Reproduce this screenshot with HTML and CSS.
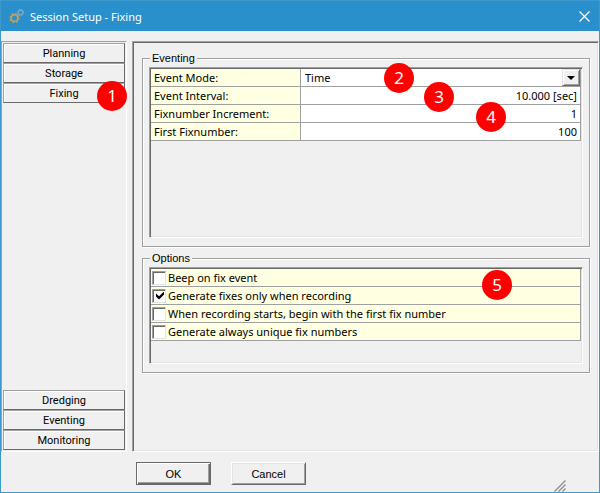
FILE: index.html
```html
<!DOCTYPE html>
<html lang="en">
<head>
    <meta charset="UTF-8">
    <meta name="viewport" content="width=device-width, initial-scale=1.0">
    <title>Session Setup - Fixing</title>
    <link rel="stylesheet" href="styles.css">
</head>
<body>
    <div class="window">
        <header class="titlebar">
            <svg class="app-icon" width="16" height="16" viewBox="0 0 16 16" fill="none">
                <circle cx="5.500" cy="10" r="3.300" stroke="#cfa04e" stroke-width="1.500" />
                <circle cx="5.500" cy="10" r="4.500" stroke="#cfa04e" stroke-width="1.200" stroke-dasharray="1.750 1.784" />
                <circle cx="11.500" cy="4.500" r="2.300" stroke="#7fa9c4" stroke-width="1.200" />
                <circle cx="11.500" cy="4.500" r="3.300" stroke="#7fa9c4" stroke-width="1" stroke-dasharray="1.300 1.292" />
            </svg>
            <h1 class="title">Session Setup - Fixing</h1>
            <button class="close" type="button" aria-label="Close">
                <svg width="11" height="11" viewBox="0 0 11 11" stroke="#fff" stroke-width="1.200">
                    <path d="M0.500 0.500L10.500 10.500M10.500 0.500L0.500 10.500" />
                </svg>
            </button>
        </header>

        <div class="content">
            <nav class="sidebar">
                <button class="tab" type="button">Planning</button>
                <button class="tab" type="button">Storage</button>
                <button class="tab" type="button">Fixing</button>
                <div class="spacer"></div>
                <button class="tab" type="button">Dredging</button>
                <button class="tab" type="button">Eventing</button>
                <button class="tab" type="button">Monitoring</button>
                <span class="badge badge-1">1</span>
            </nav>

            <main class="panel">
                <fieldset class="group">
                    <legend>Eventing</legend>
                    <div class="sunken eventing">
                        <table class="grid">
                            <tr>
                                <th><label for="mode">Event Mode:</label></th>
                                <td>
                                    <div class="select-wrap">
                                        <select id="mode">
                                            <option>Time</option>
                                        </select>
                                        <span class="arrow"></span>
                                    </div>
                                </td>
                            </tr>
                            <tr>
                                <th><label for="interval">Event Interval:</label></th>
                                <td><input type="text" id="interval" value="10.000 [sec]"></td>
                            </tr>
                            <tr>
                                <th><label for="increment">Fixnumber Increment:</label></th>
                                <td><input type="text" id="increment" value="1"></td>
                            </tr>
                            <tr>
                                <th><label for="first">First Fixnumber:</label></th>
                                <td><input type="text" id="first" value="100"></td>
                            </tr>
                        </table>
                        <span class="badge badge-2">2</span>
                        <span class="badge badge-3">3</span>
                        <span class="badge badge-4">4</span>
                    </div>
                </fieldset>

                <fieldset class="group">
                    <legend>Options</legend>
                    <div class="sunken options">
                        <label class="option"><input type="checkbox">Beep on fix event</label>
                        <label class="option"><input type="checkbox" checked>Generate fixes only when recording</label>
                        <label class="option"><input type="checkbox">When recording starts, begin with the first fix number</label>
                        <label class="option"><input type="checkbox">Generate always unique fix numbers</label>
                        <span class="badge badge-5">5</span>
                    </div>
                </fieldset>
            </main>
        </div>

        <footer class="footer">
            <button class="btn btn-default" type="submit">OK</button>
            <button class="btn" type="button">Cancel</button>
            <svg class="grip" width="12" height="12" viewBox="0 0 12 12" stroke="#8c8c8c" stroke-width="1.300">
                <path d="M0.500 11.500L11.500 0.500M4.500 11.500L11.500 4.500M8.500 11.500L11.500 8.500" />
            </svg>
        </footer>
    </div>
</body>
</html>
```
FILE: styles.css
```css
* {
    box-sizing: border-box;
}

body {
    margin: 0;
    font-family: "Noto Sans", "Open Sans", sans-serif;
    font-size: 11px;
    color: #000;
}

button,
input,
select {
    font: inherit;
    color: inherit;
}

.window {
    min-height: 100vh;
    display: flex;
    flex-direction: column;
    border: 1px solid #3c98cd;
    background: #f0f0f0;
}

.titlebar {
    height: 30px;
    display: flex;
    align-items: center;
    padding: 0 9px 0 8px;
    background: #2a90cc;
    color: #fff;
}

.title {
    flex: 1;
    margin: 0 0 0 5px;
    font-size: 11px;
    font-weight: normal;
}

.close {
    display: flex;
    padding: 0;
    border: none;
    background: none;
}

.content {
    flex: 1;
    display: flex;
    gap: 5px;
    padding-top: 10px;
}

/* Sidebar */
.sidebar {
    position: relative;
    width: 126px;
    display: flex;
    flex-direction: column;
    padding: 1px;
    border: 1px solid;
    border-color: #a0a0a0 #fff #fff #a0a0a0;
}

.spacer {
    flex: 1;
}

.tab {
    height: 20px;
    padding: 1px 0 0;
    border: 1px solid;
    border-color: #a0a0a0 #696969 #696969 #a0a0a0;
    box-shadow: inset 1px 1px 0 #fff;
    background: #f0f0f0;
    font-family: Roboto, sans-serif;
    line-height: 17px;
}

/* Main panel */
.panel {
    flex: 1;
    display: flex;
    flex-direction: column;
    gap: 4px;
    padding: 9px 8px 8px 9px;
    border: 1px solid;
    border-color: #a0a0a0 #fff #fff #a0a0a0;
    box-shadow: inset 1px 1px 0 #696969, inset -1px -1px 0 #e3e3e3;
}

.group {
    min-width: 0;
    margin: 0;
    padding: 2px 6px 8px;
    border: 1px solid #a0a0a0;
    box-shadow: 1px 1px 0 #fff, inset 1px 1px 0 #fff;
}

.group legend {
    padding: 0 2px;
    margin-left: 1px;
    background: #f0f0f0;
    font-family: "Liberation Sans", Arial, sans-serif;
    line-height: 14px;
}

.sunken {
    position: relative;
    padding: 1px;
    border: 1px solid;
    border-color: #a0a0a0 #fff #fff #a0a0a0;
    box-shadow: inset 1px 1px 0 #696969, inset -1px -1px 0 #e3e3e3;
}

.eventing {
    min-height: 171px;
}

.options {
    min-height: 97px;
}

.grid {
    width: 100%;
    table-layout: fixed;
    border-collapse: separate;
    border-spacing: 0;
}

.grid th,
.grid td {
    height: 18px;
    padding: 0;
    border-right: 1px solid #a0a0a0;
    border-bottom: 1px solid #a0a0a0;
    line-height: 17px;
}

.grid th {
    width: 150px;
    padding-left: 3px;
    background: #ffffe1;
    font-weight: normal;
    text-align: left;
}

.grid td {
    background: #fff;
}

.grid label,
.grid input,
.grid select {
    display: block;
    width: 100%;
    height: 17px;
}

.grid input {
    padding: 0 3px;
    border: none;
    background: none;
    text-align: right;
}

.grid select {
    appearance: none;
    padding: 0 20px 0 4px;
    border: none;
    background: none;
}

.select-wrap {
    position: relative;
}

.arrow {
    position: absolute;
    top: 0;
    right: 0;
    width: 18px;
    height: 17px;
    display: flex;
    align-items: center;
    justify-content: center;
    border: 1px solid;
    border-color: #e3e3e3 #696969 #696969 #e3e3e3;
    box-shadow: inset 1px 1px 0 #fff, inset -1px -1px 0 #a0a0a0;
    background: #f0f0f0;
    pointer-events: none;
}

.arrow::after {
    content: "";
    border: 4px solid transparent;
    border-top-color: #000;
    border-bottom: none;
}

/* Options */
.option {
    height: 18px;
    display: flex;
    align-items: center;
    gap: 2px;
    padding-left: 1px;
    border-right: 1px solid #a0a0a0;
    border-bottom: 1px solid #a0a0a0;
    background: #ffffe1;
    line-height: 17px;
}

.option input {
    appearance: none;
    width: 14px;
    height: 14px;
    margin: 0;
    border: 1px solid;
    border-color: #a0a0a0 #e3e3e3 #e3e3e3 #a0a0a0;
    box-shadow: inset 1px 1px 0 #696969;
    background: #fff;
}

.option input:checked::after {
    content: "";
    display: block;
    width: 8px;
    height: 8px;
    margin: 2px 0 0 3px;
    background: #000;
    clip-path: polygon(0 25%, 38% 58%, 100% 0, 100% 38%, 38% 100%, 0 62%);
}

/* Footer */
.footer {
    height: 40px;
    display: flex;
    align-items: flex-start;
    gap: 20px;
    padding: 10px 33px 0 135px;
}

.btn {
    width: 75px;
    height: 23px;
    padding: 0;
    border: 1px solid;
    border-color: #fff #696969 #696969 #fff;
    box-shadow: inset 1px 1px 0 #e3e3e3, inset -1px -1px 0 #a0a0a0;
    background: #f0f0f0;
    font-family: "Liberation Sans", Arial, sans-serif;
}

.btn-default {
    border-color: #696969;
    box-shadow: inset 1px 1px 0 #fff, inset -1px -1px 0 #696969, inset -2px -2px 0 #a0a0a0;
}

.grip {
    align-self: flex-end;
    margin-left: auto;
}

/* Numbered callouts */
.badge {
    position: absolute;
    width: 30px;
    height: 30px;
    border-radius: 50%;
    background: #f00;
    color: #fff;
    font-size: 17px;
    line-height: 30px;
    text-align: center;
}

.badge-1 {
    top: 39px;
    right: -1px;
}

.badge-2 {
    top: -5px;
    right: 168px;
}

.badge-3 {
    top: 14px;
    right: 128px;
}

.badge-4 {
    top: 34px;
    right: 76px;
}

.badge-5 {
    top: 2px;
    right: 70px;
}
```
